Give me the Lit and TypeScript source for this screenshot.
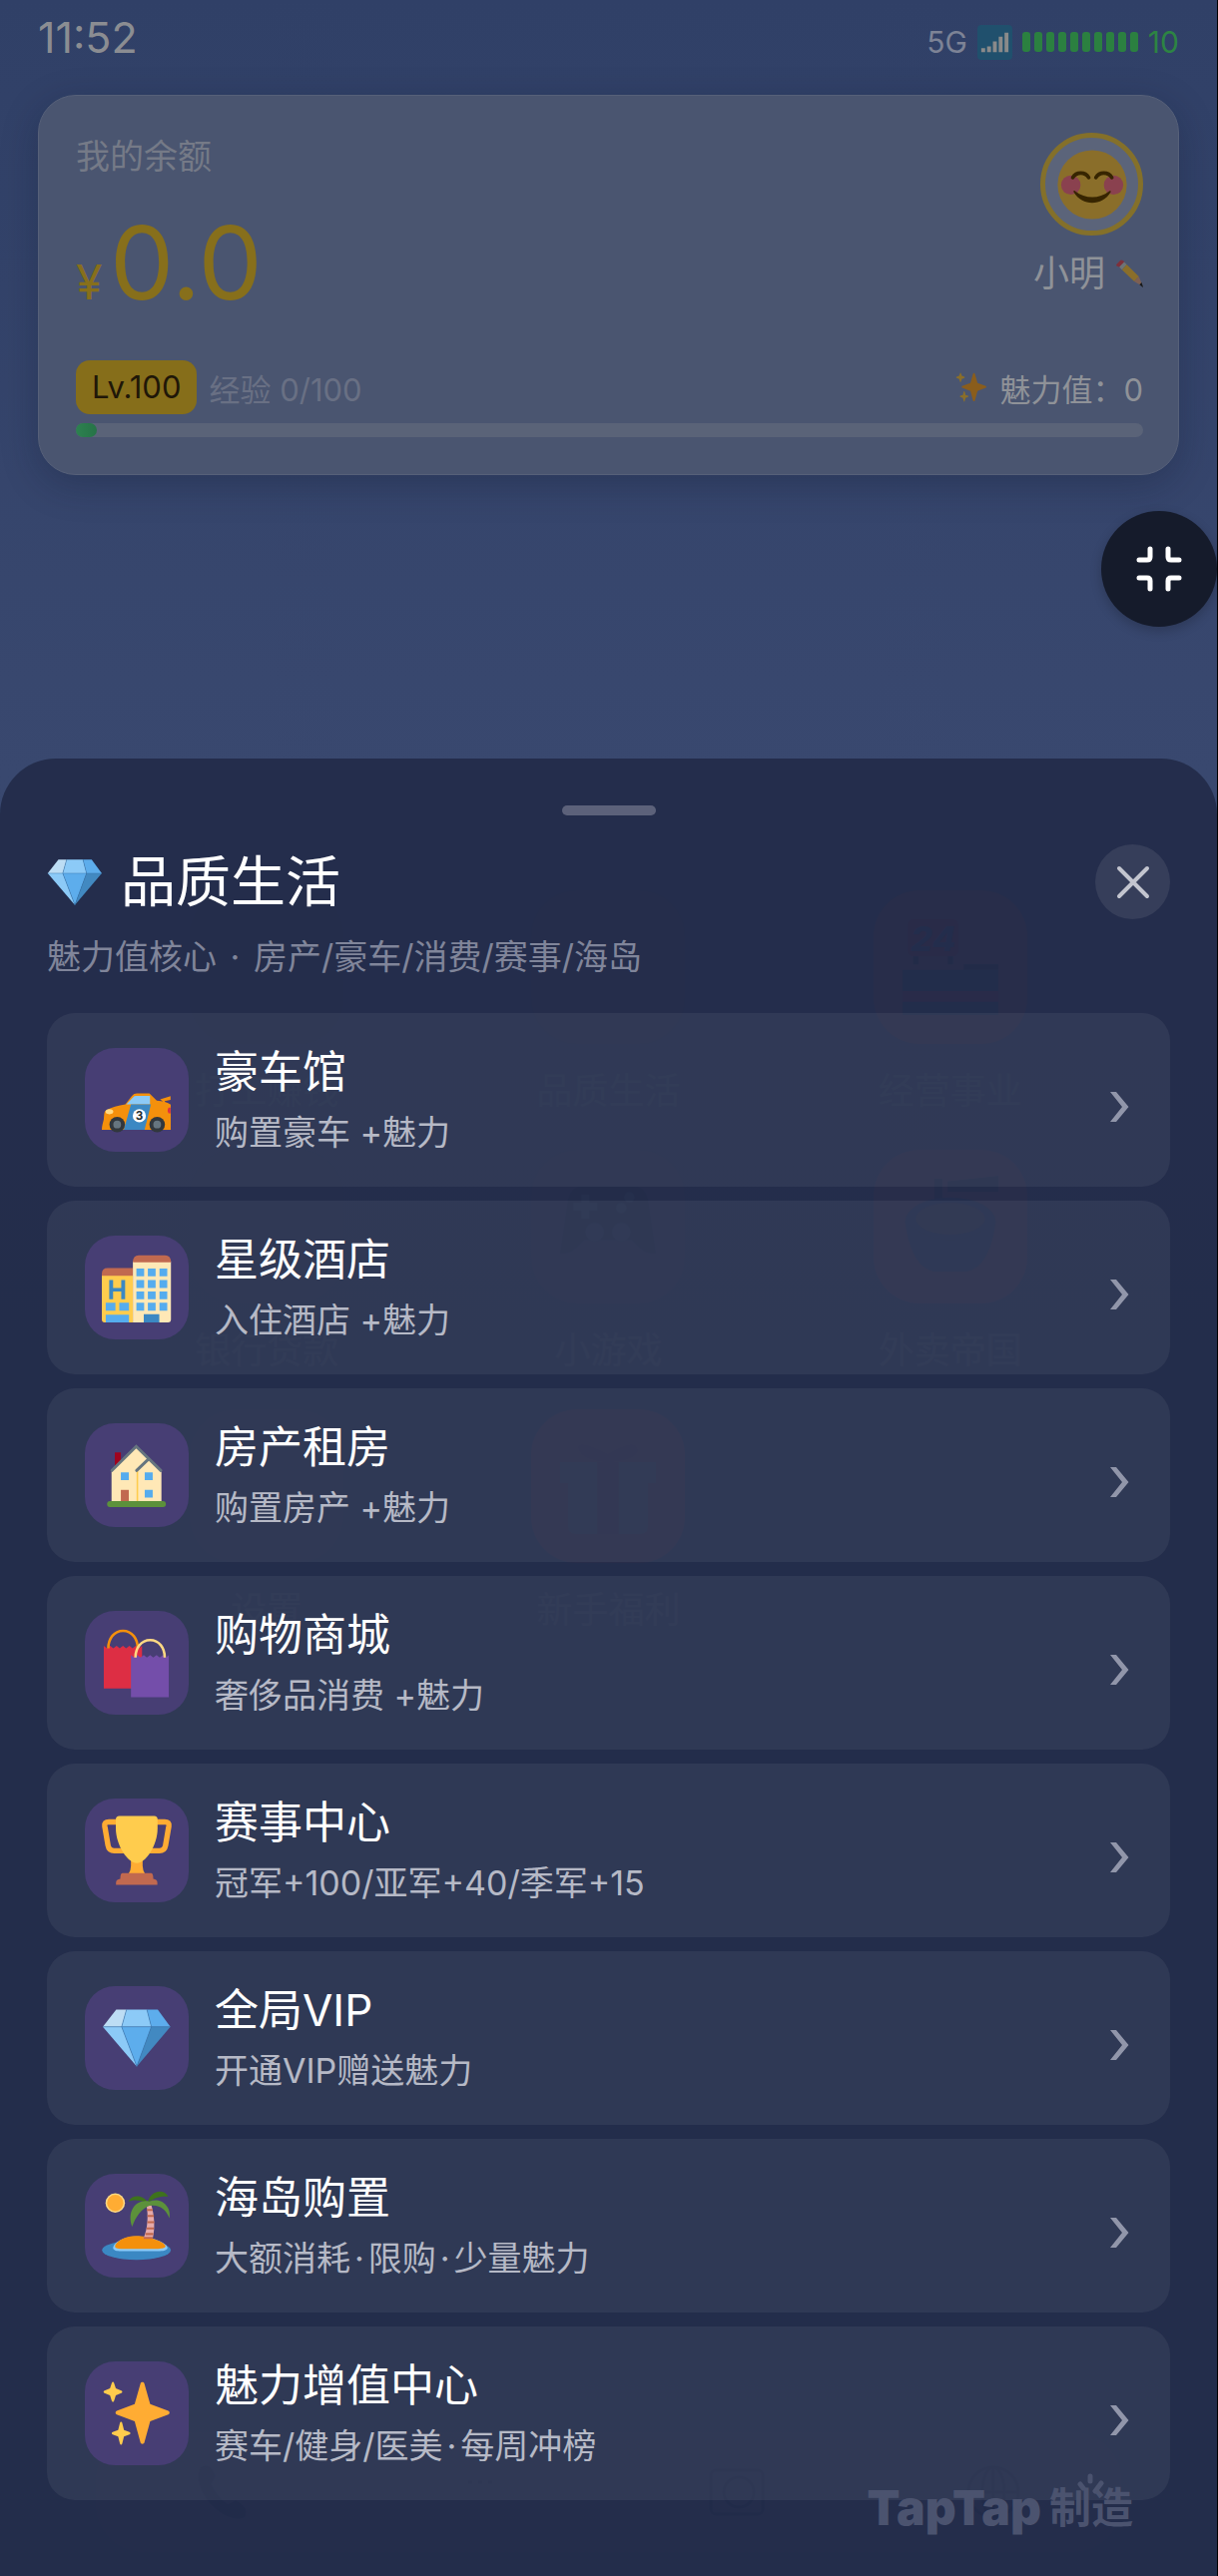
import { LitElement, html, css, svg } from 'lit';
import { customElement, property, state } from 'lit/decorators.js';

const emojis = {
    gem: svg`
        <path fill="#bdddf4" d="M7.4 3.3h5.3l-2.5 8.9H.5z"/>
        <path fill="#8ccaf7" d="M12.7 3.3h10.5l2.3 8.9H10.2z"/>
        <path fill="#5dadec" d="M23.2 3.3h5.6l6.5 8.9h-9.8z"/>
        <path fill="#8ccaf7" d="M.5 12.2h9.7L18 32.6z"/>
        <path fill="#5dadec" d="M10.2 12.2h15.3L18 32.6z"/>
        <path fill="#4289c1" d="M25.5 12.2h9.8L18 32.6z"/>
        <path fill="none" stroke="#3b7ab0" stroke-width=".3" d="M.5 12.2h34.8M12.7 3.3l-2.5 8.9L18 32.6l7.5-20.4-2.3-8.9"/>`,
    car: svg`
        <path fill="#f4900c" d="M0 33.4c0-2 .6-3.6 1-5.4.2-2.2.1-3.9 1-4.5 2.8-1.8 6.500-2.7 10.100-3.200l3.400-4.400q1-1.200 2.600-1.200h6.400l3.800 3.700c3 .3 5.700.8 7.200 2v13z"/>
        <path fill="#f4900c" d="M30 17.800l5.400-1.700v1.900l-3 .6v1h-1.200v-1z"/>
        <path fill="#8ccaf7" d="M12.600 20.300l3.600-3.700q.5-.6 1.400-.6H24.800v4.300z"/>
        <path fill="#3b88c3" d="M15 20.300h10.300l-3.300 13.100H11.300z"/>
        <ellipse cx="3.900" cy="24.100" rx="2" ry="1.300" fill="#ffd983"/>
        <path fill="#dd2e44" d="M35.400 22h-1q-1 1.500 0 3h1z"/>
        <circle cx="7.900" cy="30.700" r="4" fill="#31373d"/>
        <circle cx="7.900" cy="30.700" r="2" fill="#66757f"/>
        <circle cx="28.500" cy="30.700" r="4" fill="#31373d"/>
        <circle cx="28.500" cy="30.700" r="2" fill="#66757f"/>
        <circle cx="19.300" cy="26.200" r="3.400" fill="#fff"/>
        <text x="19.300" y="28.200" font-size="6" font-weight="700" text-anchor="middle" fill="#292f33">3</text>`,
    hotel: svg`
        <path fill="#ffcc4d" d="M0 11h16v25H1.500Q0 36 0 34.500z"/>
        <path fill="#c1694f" d="M0 12V11q0-3 3-3h13v4z"/>
        <path fill="#ffe8b6" d="M16 4.500h19.600v30q0 1.500-1.500 1.500H16z"/>
        <path fill="#c1694f" d="M16 5q0-3.600 3-3.600h13.600q3 0 3 3.600z"/>
        <path fill="#3b88c3" d="M3.800 14.200h2v4h4.200v-4h2V24h-2v-4H5.800v4h-2zM21.600 31.700h8V36h-8z"/>
        <path fill="#55acee" d="M17.800 8.200h4v4h-4zm5.900 0h4v4h-4zm6 0h4v4h-4zM17.800 14.200h4v4h-4zm5.900 0h4v4h-4zm6 0h4v4h-4zM17.800 20h4v4h-4zm5.900 0h4v4h-4zm6 0h4v4h-4zM17.800 25.900h4v4h-4zm5.900 0h4v4h-4zm6 0h4v4h-4zM2 25.900h5v4H2zm7 0h5v4H9zM2 32h12v4H2z"/>`,
    house: svg`
        <path fill="#a0041e" d="M6.700 6.300h3.100V14H6.700z"/>
        <path fill="#ffe8b6" d="M5 16.300L17.700 3.300l13 13v15.200H5z"/>
        <path fill="#ffcc4d" d="M17.900 16h.8v15.500h-.8z"/>
        <path fill="none" stroke="#66757f" stroke-width="1.500" stroke-linecap="round" d="M5.200 15.600L17.700 3.200l12.700 12.400M17.900 15.600l6.300-6"/>
        <path fill="#55acee" d="M9.800 16.600h4.100v4H9.800zm12.300 0h4.100v4h-4.100zm0 9h4.100v4h-4.100z"/>
        <path fill="#c1694f" d="M9.800 25.600h4.100v6H9.800z"/>
        <rect x="2.700" y="31.400" width="30.300" height="3" rx="1.500" fill="#5c913b"/>`,
    bags: svg`
        <path fill="#dd2e44" d="M1 9.300l1.600 1.300 1.700-1.300 1.600 1.300 1.700-1.300 1.600 1.300 1.700-1.300 1.600 1.300 1.700-1.300 1.600 1.300 1.700-1.300 1.600 1.300 1.600-1.300v22H1z"/>
        <path fill="none" stroke="#f4900c" stroke-width="1.300" d="M3.300 10.600c0-5 3-9.100 7.600-9.100s7.600 4.100 7.600 9.100"/>
        <path fill="#744eaa" d="M15 14l1.600 1.300 1.700-1.300 1.600 1.300 1.700-1.300 1.600 1.300 1.700-1.300 1.600 1.300 1.700-1.300 1.600 1.300 1.700-1.300 1.500 1.300 1.500-1.300v21.800H15z"/>
        <path fill="none" stroke="#ffd983" stroke-width="1.300" d="M17.300 15.300c0-5 3-9 7.600-9s7.500 4 7.500 9"/>`,
    trophy: svg`
        <path fill="none" stroke="#ffac33" stroke-width="2.800" stroke-linejoin="round" d="M8 3.300H3.600Q1.200 3.300 1.500 5.500l1.700 10q.5 2.700 3.200 2.700H13M28 3.300h4.400q2.400 0 2.100 2.200l-1.700 10q-.5 2.700-3.200 2.700H23"/>
        <path fill="#ffac33" d="M15 23h6v3q0 2.500 1.500 4.600h-9Q15 28.500 15 26z"/>
        <path fill="#ffcc4d" d="M9 .2h18q1.700 0 1.700 1.800v4.500C28.700 15.500 22.500 24.500 18 24.500S7.200 15.500 7.200 6.500V2Q7.200.2 9 .2z"/>
        <path fill="#c1694f" d="M10.700 29.700h14.600q1.200 0 1.200 3 2.100.2 2.100 2v1H7.300v-1q0-1.800 2.200-2 0-3 1.200-3z"/>`,
    island: svg`
        <circle cx="6.900" cy="6.300" r="5" fill="#ffd983"/>
        <circle cx="6.900" cy="6.300" r="4.200" fill="#ffac33"/>
        <ellipse cx="17.800" cy="30.600" rx="17.700" ry="5" fill="#3b88c3"/>
        <path fill="#8ccaf7" d="M5.800 29.500c0-2.500 5-6 12-6s16 3 16 6c0 1-1.500 1.600-4 1.600H9c-2 0-3.200-.6-3.200-1.600z"/>
        <path fill="#f4900c" d="M6.800 28.800c0-2.200 4.500-5.500 11-5.500s15 3.300 15 5.300c0 .8-1.300 1.300-3.800 1.300H9.900c-2 0-3.100-.4-3.100-1.100z"/>
        <path fill="#e6aaaa" d="M23 7.500h2.500c1.600 5 2 12 .7 17.200h-4.800c2.300-5 2.600-12.200 1.600-17.200z"/>
        <path stroke="#c1694f" stroke-width="1.100" d="M23.200 9.900h3M23.500 13h3.300M23.500 16.200h3.500M23.100 19.400h3.700M22.500 22.300h4M21.500 24.300h4.700"/>
        <path fill="#3e721d" d="M24 6.500C21.500 1.800 15.500 1.800 13.700 5.600c3.500-1.300 6.300-.5 10.300.9zM23.700 6C25-.5 32.300-1.200 34.200 3c-3.500-.3-6.500.3-10.500 3z"/>
        <path fill="#5c913b" d="M24.500 5.500c-6.500-1.600-11.900 4.600-8.900 13 2-5.500 5-9.300 8.900-10.800 5.200-.9 8.500 1.800 10.300 6.400 1.200-6.500-4.800-11-10.300-8.600z"/>`,
    sparkles: svg`
        <path fill="#ffac33" d="M34.200 16.700l-9.300-3.400L21.900 2.700c-.3-1-1.700-1-2 0l-3 10.600-9.200 3.400c-.9.400-.9 1.600 0 2l9.200 3.400 3 11c.3 1 1.700 1 2 0l3-11 9.300-3.400c.9-.4.9-1.600 0-2z"/>
        <path fill="#ffcc4d" d="M10 6.300L7.200 5.200 6.300 2.400c-.2-.8-1-.8-1.200 0l-.9 2.800-2.800 1.100c-.7.3-.7 1 0 1.300l2.800 1.100.9 2.900c.2.800 1 .8 1.200 0l.9-2.900L10 7.600c.7-.3.7-1 0-1.300zM14.200 27.600l-2.800-1-.9-3.600c-.2-.8-1-.8-1.200 0l-.9 3.600-2.800 1c-.7.300-.7 1 0 1.300l2.800 1.100.9 3.600c.2.800 1 .8 1.200 0l.9-3.600 2.800-1.100c.7-.3.7-1 0-1.300z"/>`,
    smile: svg`
        <circle cx="18" cy="18" r="17.800" fill="#ffcc4d"/>
        <circle cx="7" cy="18.200" r="5" fill="#ff7892"/>
        <circle cx="29" cy="18.200" r="5" fill="#ff7892"/>
        <path fill="none" stroke="#664500" stroke-width="1.900" stroke-linecap="round" d="M8 14.300c1.800-3.100 6.400-3.100 8.200 0M19.900 14.300c1.800-3.100 6.400-3.100 8.200 0"/>
        <path fill="#664500" d="M8.500 21.900c-.4-.7.300-1 .7-.6 5.400 4.200 12.300 4.200 17.600 0 .5-.4 1.100.1.700.6-4.300 7.300-14.700 7.300-19 0z"/>`,
    pencil: svg`
        <path fill="#ea596e" d="M1.500 6.500L6.800.9q1.800-.8 3.400.7l2 2-6.300 6.500L2 8.500Q1 7.500 1.500 6.500z"/>
        <path fill="#ccd6dd" d="M5.300 9.800l6.300-6.700 3.200 3.200-6 6.800z"/>
        <path fill="#ffcc4d" d="M8.800 13.100l6-6.800 15.600 15.600-5.800 6.500z"/>
        <path fill="#e8b09a" d="M24.600 28.400l5.800-6.500 5.300 12.900z"/>
        <path fill="#292f33" d="M31.300 32.500l2.700-3 1.900 5.500q.1.700-.5.600z"/>`,
    signal: svg`
        <rect width="36" height="36" rx="4" fill="#3b94c9"/>
        <path fill="#fff" d="M4 24h4v4H4zM10 22h4v6h-4zM16 17h4v11h-4zM22 12h4v16h-4zM28 8h4v20h-4z"/>`,
    store: svg`
        <rect x="2" width="19" height="14" rx="2" fill="#a01434"/>
        <text x="11.500" y="12" font-size="13" font-weight="800" text-anchor="middle" fill="#2c466e">24</text>
        <path fill="#141c34" d="M4 14h2v3H4zm13 0h2v3h-2zM23 17h13v2H23z"/>
        <path fill="#1c3c6c" d="M0 19h36v17H0z"/>
        <path fill="#961a48" d="M0 27h36v4H0z"/>`,
    gamepad: svg`
        <path fill="#282a48" d="M8 3h20q4 0 5 5l3 20q-4 1-9-5H9q-5 6-9 5L3 8q1-5 5-5z"/>
        <path fill="#4a6072" d="M8 6h3v3h3v3h-3v3H8v-3H5V9h3z"/>
        <circle cx="26" cy="7" r="2" fill="#4a6072"/>
        <circle cx="23" cy="11" r="2" fill="#4a6072"/>
        <circle cx="13" cy="20" r="3.500" fill="#4a5a70"/>
        <circle cx="23" cy="20" r="3.500" fill="#4a5a70"/>`,
    noodles: svg`
        <path fill="#282a48" d="M12 0h3v13h-3zM17 1l19-2v6H17z"/>
        <ellipse cx="18" cy="16" rx="17" ry="9" fill="#2c466e"/>
        <ellipse cx="18" cy="15" rx="13" ry="6" fill="#6a4a50"/>
        <path fill="#2c466e" d="M1 16q2 17 11 19h12q9-2 11-19-17 14-34 0z"/>`,
    gift: svg`
        <path fill="#6a6c74" d="M0 9h14v8H0zm22 0h14v8H22zM3 17h11v19H6q-3 0-3-3zm19 0h11v16q0 3-3 3h-8z"/>
        <path fill="#70305a" d="M14 9h8v27h-8zM18 9Q8 8 7 4t11 2q10-6 11-2T18 9z"/>`
};

type EmojiName = keyof typeof emojis;

interface MenuItem {
    icon: EmojiName;
    title: string;
    desc: string;
}

interface AppTile {
    label: string;
    tint: string;
    icon?: EmojiName;
}

@customElement('emoji-icon')
export class EmojiIcon extends LitElement {
    static styles = css`
        :host {
            display: block;
            flex: none;
        }

        svg {
            display: block;
            width: 100%;
            height: 100%;
            overflow: visible;
        }
    `;

    @property() name: EmojiName = 'gem';

    render() {
        return html`<svg viewBox="0 0 36 36" aria-hidden="true">${emojis[this.name]}</svg>`;
    }
}

@customElement('balance-card')
export class BalanceCard extends LitElement {
    static styles = css`
        :host {
            display: block;
            box-sizing: border-box;
            padding: 37px 35px 37px 37px;
            border: 1px solid #566079;
            border-radius: 38px;
            background: #4a5570;
            box-shadow: 0 10px 36px rgba(10, 20, 40, 0.25);
            color: #8f9298;
        }

        emoji-icon {
            filter: brightness(0.54);
        }

        .top,
        .level,
        .charm,
        .name {
            display: flex;
            align-items: center;
        }

        .top {
            justify-content: space-between;
            align-items: flex-start;
        }

        .label {
            font-size: 34px;
            line-height: 48px;
            color: #757a87;
        }

        .amount {
            display: flex;
            align-items: baseline;
            margin-top: 22px;
            font-size: 102px;
            line-height: 120px;
            color: #876f1b;
        }

        .amount small {
            width: 34px;
            font-size: 48px;
            line-height: 56px;
        }

        .profile {
            display: flex;
            flex-direction: column;
            align-items: flex-end;
            gap: 14px;
        }

        .avatar {
            display: grid;
            place-items: center;
            box-sizing: border-box;
            width: 103px;
            height: 103px;
            border: 5px solid #84702a;
            border-radius: 50%;
            background: #5b647a;
        }

        .avatar emoji-icon {
            width: 70px;
            height: 70px;
        }

        .name {
            gap: 10px;
            padding: 0;
            border: 0;
            background: none;
            color: inherit;
            font: inherit;
            font-size: 36px;
            line-height: 48px;
        }

        .name emoji-icon {
            width: 28px;
            height: 28px;
        }

        .level {
            gap: 12px;
            height: 54px;
            margin-top: 38px;
            font-size: 31px;
            color: #697084;
        }

        .badge {
            padding: 0 16px;
            border-radius: 14px;
            background: #866e1a;
            line-height: 54px;
            color: #1f1708;
        }

        .charm {
            gap: 12px;
            margin-left: auto;
            color: #8f9298;
        }

        .charm emoji-icon {
            width: 32px;
            height: 32px;
        }

        .track {
            height: 14px;
            margin-top: 9px;
            border-radius: 7px;
            background: #5a6378;
        }

        .fill {
            height: 100%;
            border-radius: 7px;
            background: linear-gradient(90deg, #2d8150, #267347);
        }
    `;

    @property({ type: Number }) exp = 0;

    render() {
        return html`
            <div class="top">
                <div>
                    <div class="label">我的余额</div>
                    <div class="amount"><small>¥</small>0.0</div>
                </div>
                <div class="profile">
                    <div class="avatar"><emoji-icon name="smile"></emoji-icon></div>
                    <button class="name">小明<emoji-icon name="pencil"></emoji-icon></button>
                </div>
            </div>
            <div class="level">
                <span class="badge">Lv.100</span>
                <span>经验 ${this.exp}/100</span>
                <span class="charm"><emoji-icon name="sparkles"></emoji-icon>魅力值：0</span>
            </div>
            <div class="track">
                <div class="fill" style="width: ${Math.max(this.exp, 2)}%"></div>
            </div>
        `;
    }
}

@customElement('life-sheet')
export class LifeSheet extends LitElement {
    static styles = css`
        :host {
            display: block;
            box-sizing: border-box;
            padding: 47px 47px 76px;
            border-radius: 56px 56px 0 0;
            background: rgba(35, 44, 74, 0.95);
            color: #fff;
        }

        .handle {
            width: 94px;
            height: 10px;
            margin: 0 auto 29px;
            border-radius: 5px;
            background: #5c617a;
        }

        header {
            display: flex;
            align-items: center;
            gap: 18px;
        }

        header emoji-icon {
            width: 56px;
            height: 56px;
        }

        h2 {
            flex: 1;
            margin: 0;
            font-size: 55px;
            font-weight: 400;
            line-height: 75px;
        }

        .close {
            display: grid;
            place-items: center;
            width: 75px;
            height: 75px;
            padding: 0;
            border: 0;
            border-radius: 50%;
            background: #363e5a;
        }

        .close svg {
            width: 34px;
            height: 34px;
        }

        .subtitle {
            margin: 14px 0 32px;
            font-size: 34px;
            line-height: 48px;
            color: #80859a;
        }

        .dot {
            margin: 0 4px;
        }

        ul {
            display: flex;
            flex-direction: column;
            gap: 14px;
            margin: 0;
            padding: 0;
            list-style: none;
        }

        .item {
            display: flex;
            align-items: center;
            gap: 26px;
            width: 100%;
            height: 174px;
            padding: 0 41px 0 38px;
            border: 0;
            border-radius: 28px;
            background: rgba(255, 255, 255, 0.06);
            color: inherit;
            font: inherit;
            text-align: left;
        }

        .tile {
            display: grid;
            place-items: center;
            flex: none;
            width: 104px;
            height: 104px;
            border-radius: 30px;
            background: #473e74;
        }

        .tile emoji-icon {
            width: 70px;
            height: 70px;
        }

        .text {
            display: flex;
            flex: 1;
            flex-direction: column;
            gap: 8px;
            padding-top: 2px;
        }

        .title {
            font-size: 44px;
            line-height: 56px;
        }

        .desc {
            font-size: 34px;
            line-height: 50px;
            color: #b6b9c6;
        }

        .chevron {
            width: 20px;
            height: 30px;
            margin-top: 14px;
            fill: #9196aa;
        }
    `;

    @property({ attribute: false }) items: MenuItem[] = [];

    close() {
        this.dispatchEvent(new CustomEvent('sheet-close'));
    }

    renderDotted(text: string) {
        return text.split('·').map((part, i) => i === 0 ? part : html`<span class="dot">·</span>${part}`);
    }

    renderItem(item: MenuItem) {
        return html`
            <li>
                <button class="item">
                    <span class="tile"><emoji-icon name=${item.icon}></emoji-icon></span>
                    <span class="text">
                        <span class="title">${item.title}</span>
                        <span class="desc">${this.renderDotted(item.desc)}</span>
                    </span>
                    <svg class="chevron" viewBox="0 0 20 30" aria-hidden="true">
                        <path d="M1 0h6l12.500 15L7 30H1l12-15z"/>
                    </svg>
                </button>
            </li>
        `;
    }

    render() {
        return html`
            <div class="handle"></div>
            <header>
                <emoji-icon name="gem"></emoji-icon>
                <h2>品质生活</h2>
                <button class="close" aria-label="关闭" @click=${this.close}>
                    <svg viewBox="0 0 34 34" fill="none" stroke="#c3c5cf" stroke-width="4" stroke-linecap="round">
                        <path d="M3 3l28 28M31 3L3 31"/>
                    </svg>
                </button>
            </header>
            <p class="subtitle">${this.renderDotted('魅力值核心 · 房产/豪车/消费/赛事/海岛')}</p>
            <ul>${this.items.map(item => this.renderItem(item))}</ul>
        `;
    }
}

@customElement('app-root')
export class AppRoot extends LitElement {
    static styles = css`
        :host {
            display: grid;
            position: relative;
            box-sizing: border-box;
            min-height: 100vh;
            border-right: 1px solid #000;
            background: linear-gradient(180deg, #304067 0%, #39486f 30%, #35456c 60%, #36406c 100%);
            font-family: Inter, "Noto Sans CJK SC", sans-serif;
            overflow: hidden;
        }

        .page,
        life-sheet {
            grid-area: 1 / 1;
            min-width: 0;
        }

        .page {
            display: flex;
            flex-direction: column;
            padding: 0 38px;
        }

        life-sheet {
            position: relative;
            align-self: end;
        }

        .status {
            display: flex;
            align-items: baseline;
            justify-content: space-between;
            height: 83px;
            padding-top: 12px;
            line-height: 50px;
        }

        time {
            font-size: 43px;
            color: #8b8d92;
        }

        .signals {
            display: flex;
            align-items: center;
            gap: 10px;
            font-size: 30px;
            color: #7d8396;
        }

        .signals emoji-icon {
            width: 35px;
            height: 35px;
            filter: brightness(0.54);
        }

        .battery {
            display: flex;
            gap: 4px;
            color: #2d8443;
        }

        .battery i {
            width: 8px;
            height: 20px;
            border-radius: 3px;
            background: #2b8040;
        }

        .percent {
            color: #2d8443;
        }

        .apps {
            display: grid;
            grid-template-columns: repeat(3, 1fr);
            gap: 36px 0;
            margin: 416px 58px 0;
            text-align: center;
            font-size: 36px;
            line-height: 46px;
            color: #6c7488;
        }

        .app {
            display: flex;
            flex-direction: column;
            align-items: center;
            gap: 24px;
        }

        .app i {
            display: grid;
            place-items: center;
            width: 154px;
            height: 154px;
            border-radius: 46px;
        }

        .app emoji-icon {
            width: 96px;
            height: 96px;
        }

        .blue { background: #38486c; }
        .plum { background: #4a3f68; }
        .orange { background: #8a4750; }
        .red { background: #8a3a52; }

        .dock {
            display: flex;
            justify-content: space-around;
            margin: auto 58px 24px;
            padding: 32px 0;
            border-radius: 48px;
            background: #39466d;
        }

        .dock svg {
            width: 56px;
            height: 56px;
            fill: none;
            stroke: #101c48;
            stroke-width: 3;
        }

        .float {
            display: grid;
            place-items: center;
            position: absolute;
            top: 512px;
            right: 0;
            width: 116px;
            height: 116px;
            padding: 0;
            border: 0;
            border-radius: 50%;
            background: #151b2b;
            box-shadow: 0 4px 12px rgba(0, 0, 0, 0.2);
        }

        .float svg {
            width: 46px;
            height: 46px;
        }

        .watermark {
            display: flex;
            align-items: center;
            gap: 8px;
            position: absolute;
            right: 84px;
            bottom: 40px;
            font-size: 48px;
            font-weight: 900;
            line-height: 56px;
            color: #4b536f;
            pointer-events: none;
        }

        .watermark .make {
            position: relative;
            font-size: 42px;
            font-weight: 700;
        }

        .watermark svg {
            position: absolute;
            left: 28px;
            top: -8px;
            width: 28px;
            height: 24px;
        }
    `;

    @state() sheetOpen = true;

    items: MenuItem[] = [
        { icon: 'car', title: '豪车馆', desc: '购置豪车 +魅力' },
        { icon: 'hotel', title: '星级酒店', desc: '入住酒店 +魅力' },
        { icon: 'house', title: '房产租房', desc: '购置房产 +魅力' },
        { icon: 'bags', title: '购物商城', desc: '奢侈品消费 +魅力' },
        { icon: 'trophy', title: '赛事中心', desc: '冠军+100/亚军+40/季军+15' },
        { icon: 'gem', title: '全局VIP', desc: '开通VIP赠送魅力' },
        { icon: 'island', title: '海岛购置', desc: '大额消耗·限购·少量魅力' },
        { icon: 'sparkles', title: '魅力增值中心', desc: '赛车/健身/医美·每周冲榜' }
    ];

    apps: AppTile[] = [
        { label: '打工赚钱', tint: 'blue' },
        { label: '品质生活', tint: 'plum' },
        { label: '经营事业', tint: 'orange', icon: 'store' },
        { label: '银行贷款', tint: 'blue' },
        { label: '小游戏', tint: 'plum', icon: 'gamepad' },
        { label: '外卖帝国', tint: 'orange', icon: 'noodles' },
        { label: '设置', tint: 'blue' },
        { label: '新手福利', tint: 'red', icon: 'gift' }
    ];

    closeSheet() {
        this.sheetOpen = false;
    }

    render() {
        return html`
            <div class="page">
                <div class="status">
                    <time>11:52</time>
                    <div class="signals">
                        <span>5G</span>
                        <emoji-icon name="signal"></emoji-icon>
                        <span class="battery">${Array.from({ length: 10 }, () => html`<i></i>`)}</span>
                        <span class="percent">10</span>
                    </div>
                </div>
                <balance-card .exp=${0}></balance-card>
                <div class="apps">
                    ${this.apps.map(app => html`
                        <div class="app">
                            <i class=${app.tint}>
                                ${app.icon ? html`<emoji-icon name=${app.icon}></emoji-icon>` : ''}
                            </i>
                            <span>${app.label}</span>
                        </div>
                    `)}
                </div>
                <div class="dock">
                    <svg viewBox="0 0 56 56"><path fill="#101c48" d="M6 4q8-4 12 8l-4 8q6 14 18 22l8-4q12 6 8 14C30 60-4 26 6 4z"/></svg>
                    <svg viewBox="0 0 56 56"><path d="M16 18h4M26 18h4M36 18h4"/></svg>
                    <svg viewBox="0 0 56 56"><rect x="2" y="6" width="52" height="44" rx="5"/><circle cx="30" cy="28" r="15"/></svg>
                    <svg viewBox="0 0 56 56"><circle cx="28" cy="28" r="25"/><ellipse cx="28" cy="28" rx="11" ry="25"/><path d="M3 28h50M28 3v50"/></svg>
                </div>
            </div>
            ${this.sheetOpen
                ? html`<life-sheet .items=${this.items} @sheet-close=${this.closeSheet}></life-sheet>`
                : ''}
            <button class="float" aria-label="退出全屏">
                <svg viewBox="0 0 46 46" fill="none" stroke="#fff" stroke-width="5" stroke-linecap="round">
                    <path d="M14 3v8q0 3-3 3H3M32 3v8q0 3 3 3h8M14 43v-8q0-3-3-3H3M32 43v-8q0-3 3-3h8"/>
                </svg>
            </button>
            <div class="watermark">
                <span>TapTap</span>
                <span class="make">制造
                    <svg viewBox="0 0 28 24" fill="none" stroke="#4b536f" stroke-width="5" stroke-linecap="round">
                        <path d="M3 12l3 4M13 4v5M24 11l-6 8"/>
                    </svg>
                </span>
            </div>
        `;
    }
}
